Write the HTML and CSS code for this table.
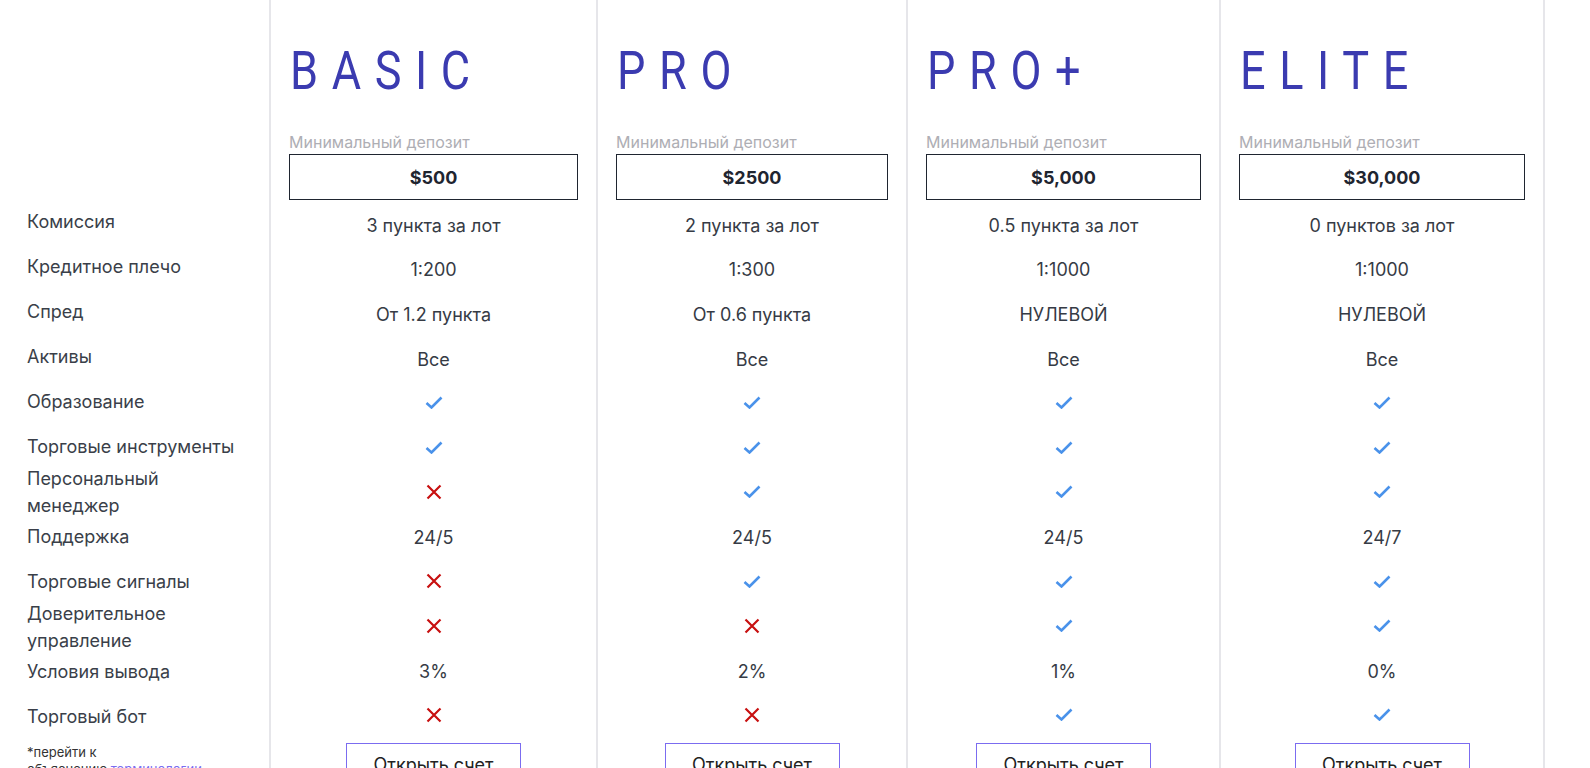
FILE: index.html
```html
<!DOCTYPE html>
<html lang="ru">
<head>
<meta charset="utf-8">
<link rel="stylesheet" href="styles.css">
</head>
<body>
<div class="table">
  <div class="labels">
    <div class="head"></div>
    <div class="lrow">Комиссия</div>
    <div class="lrow">Кредитное плечо</div>
    <div class="lrow">Спред</div>
    <div class="lrow">Активы</div>
    <div class="lrow">Образование</div>
    <div class="lrow">Торговые инструменты</div>
    <div class="lrow">Персональный<br>менеджер</div>
    <div class="lrow">Поддержка</div>
    <div class="lrow">Торговые сигналы</div>
    <div class="lrow">Доверительное<br>управление</div>
    <div class="lrow">Условия вывода</div>
    <div class="lrow">Торговый бот</div>
    <div class="note">*перейти к<br>объяснению <a href="#">терминологии</a></div>
  </div>

  <div class="plan">
    <div class="head">
      <div class="title"><span>BASIC</span></div>
      <div class="dep-label">Минимальный депозит</div>
      <div class="dep">$500</div>
    </div>
    <div class="vrow txt">3 пункта за лот</div>
    <div class="vrow txt">1:200</div>
    <div class="vrow txt">От 1.2 пункта</div>
    <div class="vrow txt">Все</div>
    <div class="vrow"><svg class="ok" viewBox="0 0 18 13"><polyline points="1.5,7 6.5,11.5 16.5,1.5"/></svg></div>
    <div class="vrow"><svg class="ok" viewBox="0 0 18 13"><polyline points="1.5,7 6.5,11.5 16.5,1.5"/></svg></div>
    <div class="vrow"><svg class="no" viewBox="0 0 16 16"><path d="M1.5 1.5L14.5 14.5M14.5 1.5L1.5 14.5"/></svg></div>
    <div class="vrow txt">24/5</div>
    <div class="vrow"><svg class="no" viewBox="0 0 16 16"><path d="M1.5 1.5L14.5 14.5M14.5 1.5L1.5 14.5"/></svg></div>
    <div class="vrow"><svg class="no" viewBox="0 0 16 16"><path d="M1.5 1.5L14.5 14.5M14.5 1.5L1.5 14.5"/></svg></div>
    <div class="vrow txt">3%</div>
    <div class="vrow"><svg class="no" viewBox="0 0 16 16"><path d="M1.5 1.5L14.5 14.5M14.5 1.5L1.5 14.5"/></svg></div>
    <div class="foot"><a class="btn" href="#">Открыть счет</a></div>
  </div>

  <div class="plan">
    <div class="head">
      <div class="title"><span>PRO</span></div>
      <div class="dep-label">Минимальный депозит</div>
      <div class="dep">$2500</div>
    </div>
    <div class="vrow txt">2 пункта за лот</div>
    <div class="vrow txt">1:300</div>
    <div class="vrow txt">От 0.6 пункта</div>
    <div class="vrow txt">Все</div>
    <div class="vrow"><svg class="ok" viewBox="0 0 18 13"><polyline points="1.5,7 6.5,11.5 16.5,1.5"/></svg></div>
    <div class="vrow"><svg class="ok" viewBox="0 0 18 13"><polyline points="1.5,7 6.5,11.5 16.5,1.5"/></svg></div>
    <div class="vrow"><svg class="ok" viewBox="0 0 18 13"><polyline points="1.5,7 6.5,11.5 16.5,1.5"/></svg></div>
    <div class="vrow txt">24/5</div>
    <div class="vrow"><svg class="ok" viewBox="0 0 18 13"><polyline points="1.5,7 6.5,11.5 16.5,1.5"/></svg></div>
    <div class="vrow"><svg class="no" viewBox="0 0 16 16"><path d="M1.5 1.5L14.5 14.5M14.5 1.5L1.5 14.5"/></svg></div>
    <div class="vrow txt">2%</div>
    <div class="vrow"><svg class="no" viewBox="0 0 16 16"><path d="M1.5 1.5L14.5 14.5M14.5 1.5L1.5 14.5"/></svg></div>
    <div class="foot"><a class="btn" href="#">Открыть счет</a></div>
  </div>

  <div class="plan">
    <div class="head">
      <div class="title"><span>PRO+</span></div>
      <div class="dep-label">Минимальный депозит</div>
      <div class="dep">$5,000</div>
    </div>
    <div class="vrow txt">0.5 пункта за лот</div>
    <div class="vrow txt">1:1000</div>
    <div class="vrow txt">НУЛЕВОЙ</div>
    <div class="vrow txt">Все</div>
    <div class="vrow"><svg class="ok" viewBox="0 0 18 13"><polyline points="1.5,7 6.5,11.5 16.5,1.5"/></svg></div>
    <div class="vrow"><svg class="ok" viewBox="0 0 18 13"><polyline points="1.5,7 6.5,11.5 16.5,1.5"/></svg></div>
    <div class="vrow"><svg class="ok" viewBox="0 0 18 13"><polyline points="1.5,7 6.5,11.5 16.5,1.5"/></svg></div>
    <div class="vrow txt">24/5</div>
    <div class="vrow"><svg class="ok" viewBox="0 0 18 13"><polyline points="1.5,7 6.5,11.5 16.5,1.5"/></svg></div>
    <div class="vrow"><svg class="ok" viewBox="0 0 18 13"><polyline points="1.5,7 6.5,11.5 16.5,1.5"/></svg></div>
    <div class="vrow txt">1%</div>
    <div class="vrow"><svg class="ok" viewBox="0 0 18 13"><polyline points="1.5,7 6.5,11.5 16.5,1.5"/></svg></div>
    <div class="foot"><a class="btn" href="#">Открыть счет</a></div>
  </div>

  <div class="plan last">
    <div class="head">
      <div class="title"><span>ELITE</span></div>
      <div class="dep-label">Минимальный депозит</div>
      <div class="dep">$30,000</div>
    </div>
    <div class="vrow txt">0 пунктов за лот</div>
    <div class="vrow txt">1:1000</div>
    <div class="vrow txt">НУЛЕВОЙ</div>
    <div class="vrow txt">Все</div>
    <div class="vrow"><svg class="ok" viewBox="0 0 18 13"><polyline points="1.5,7 6.5,11.5 16.5,1.5"/></svg></div>
    <div class="vrow"><svg class="ok" viewBox="0 0 18 13"><polyline points="1.5,7 6.5,11.5 16.5,1.5"/></svg></div>
    <div class="vrow"><svg class="ok" viewBox="0 0 18 13"><polyline points="1.5,7 6.5,11.5 16.5,1.5"/></svg></div>
    <div class="vrow txt">24/7</div>
    <div class="vrow"><svg class="ok" viewBox="0 0 18 13"><polyline points="1.5,7 6.5,11.5 16.5,1.5"/></svg></div>
    <div class="vrow"><svg class="ok" viewBox="0 0 18 13"><polyline points="1.5,7 6.5,11.5 16.5,1.5"/></svg></div>
    <div class="vrow txt">0%</div>
    <div class="vrow"><svg class="ok" viewBox="0 0 18 13"><polyline points="1.5,7 6.5,11.5 16.5,1.5"/></svg></div>
    <div class="foot"><a class="btn" href="#">Открыть счет</a></div>
  </div>
</div>
</body>
</html>
```

FILE: styles.css
```css
html, body {
  margin: 0;
  padding: 0;
  background: #fff;
  overflow: hidden;
}
body {
  font-family: Inter, "Noto Sans", sans-serif;
  color: #333840;
  height: 768px;
}
.table {
  display: grid;
  grid-template-columns: 269px 327px 310px 313px 326px 1fr;
  height: 768px;
}
.labels {
  padding-left: 27px;
}
.labels .head {
  height: 199px;
}
.lrow {
  height: 45px;
  display: flex;
  flex-direction: column;
  justify-content: center;
  font-size: 18px;
  line-height: 27px;
  color: #3a3f49;
  white-space: nowrap;
}
.note {
  margin-top: 5px;
  font-size: 13px;
  line-height: 17px;
  color: #333;
}
.note a {
  color: #7a6cf0;
  text-decoration: none;
}
.plan {
  border-left: 2px solid #e6e6ea;
  padding: 0 18px;
  display: flex;
  flex-direction: column;
}
.plan.last {
  border-right: 2px solid #e6e6ea;
}
.head {
  display: flex;
  flex-direction: column;
}
.plan .head {
  padding-top: 45px;
  height: 202px;
  box-sizing: border-box;
}
.title {
  height: 53px;
  padding-left: 1px;
}
.title span {
  display: inline-block;
  font-family: Roboto, sans-serif;
  font-weight: 400;
  font-size: 53px;
  line-height: 53px;
  letter-spacing: 16px;
  color: #3b3bb0;
  transform: scaleX(0.85);
  transform-origin: left center;
  white-space: nowrap;
}
.dep-label {
  margin-top: 34px;
  font-size: 16px;
  line-height: 20px;
  color: #aeaeb4;
}
.dep {
  margin-top: 2px;
  height: 46px;
  box-sizing: border-box;
  border: 1px solid #1f2530;
  display: flex;
  align-items: center;
  justify-content: center;
  font-weight: 700;
  font-size: 18px;
  color: #1f2530;
}
.vrow {
  height: 44.6px;
  box-sizing: border-box;
  display: flex;
  align-items: center;
  justify-content: center;
  font-size: 18px;
  color: #363b45;
  white-space: nowrap;
}
.vrow.txt {
  padding-top: 2px;
}
.ok {
  width: 18px;
  height: 13px;
  fill: none;
  stroke: #4a92ea;
  stroke-width: 2.6;
}
.no {
  width: 16px;
  height: 16px;
  fill: none;
  stroke: #c81010;
  stroke-width: 2.2;
}
.foot {
  display: flex;
  justify-content: center;
  margin-top: 6px;
}
.btn {
  display: flex;
  align-items: center;
  justify-content: center;
  width: 175px;
  height: 42px;
  box-sizing: border-box;
  border: 1px solid #7b6cf0;
  font-size: 18px;
  color: #222;
  text-decoration: none;
}
```
